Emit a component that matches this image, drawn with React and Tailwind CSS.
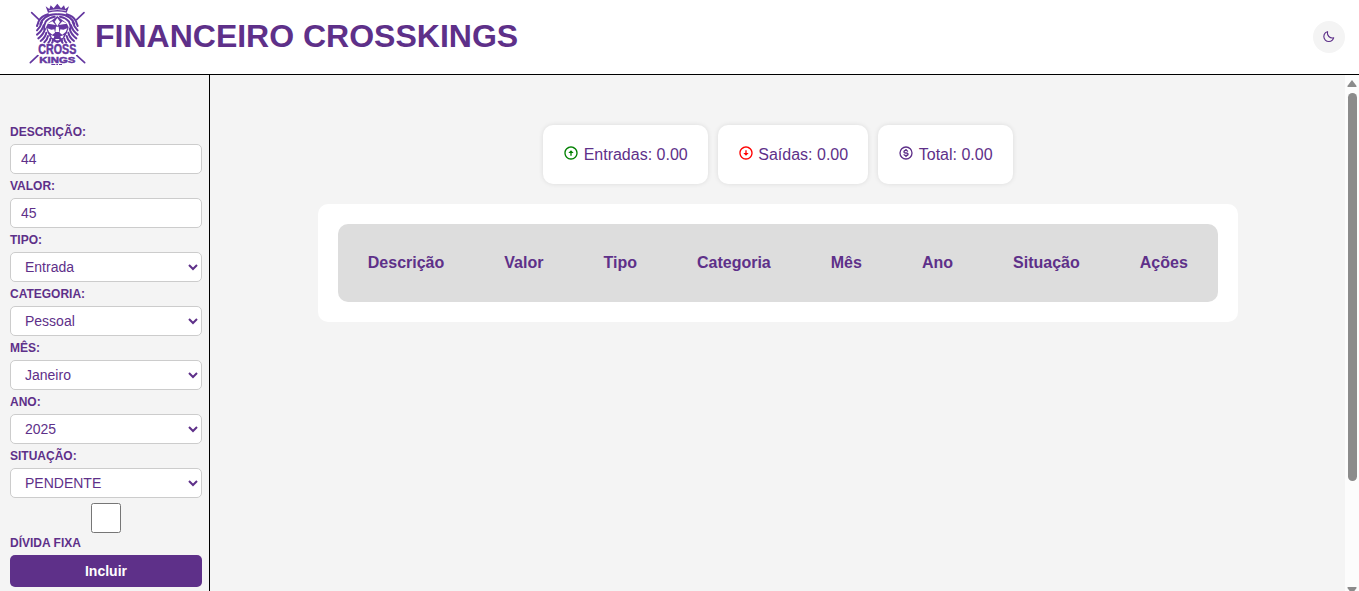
import { BiMoon, BiUpArrowCircle, BiDownArrowCircle, BiDollarCircle } from "react-icons/bi";

function ManeHalf() {
  return (
    <g fill="none" stroke="#6437a0" strokeWidth="6" strokeLinecap="round">
      <path d="M110 43Q90 42 76 52Q66 59 61 72" />
      <path d="M84 43Q64 48 56 64Q54 71 51 78" />
      <path d="M104 50Q86 53 77 65Q71 75 73 88" />
      <path d="M66 66Q62 80 51 91" />
      <path d="M71 76Q67 92 51 104" />
      <path d="M75 87Q71 103 55 115" />
      <path d="M79 98Q76 112 62 123" />
      <path d="M84 108Q82 119 73 127" />
      <path d="M91 116Q91 123 85 128" />
      <path d="M98 122Q99 126 96 129" />
    </g>
  );
}

function Logo() {
  return (
    <svg width="60" height="64" viewBox="24 9 180 192" fill="#6437a0" stroke="none" className="shrink-0">
      <path d="M35 38 56 58M192 38 170 59M31 188 54 166M194 188 170 166" fill="none" stroke="#6437a0" strokeWidth="5" strokeLinecap="round" />
      {/* crown */}
      <path d="M77 19 88 27 92 16 101 25 112 11 123 25 132 16 136 27 147 19 140 38Q112 31 84 38Z" />
      <path d="M87 32Q112 25 138 32" fill="none" stroke="#fff" strokeWidth="2" />
      {/* mane */}
      <ManeHalf />
      <g transform="translate(224 0) scale(-1 1)">
        <ManeHalf />
      </g>
      {/* face */}
      <path d="M112 48 124 58 140 70 146 82 141 98 134 112 124 124 112 130 100 124 90 112 83 98 78 82 84 70 100 58Z" />
      <path
        d="M112 54 120 65 112 78 104 65ZM82 71 97 64 107 75 94 73ZM142 71 127 64 117 75 130 73ZM82 85 94 89 103 88 105 98 97 104 87 96ZM142 85 130 89 121 88 119 98 127 104 137 96ZM108 80H116L118 96H106ZM92 105 103 109 101 115 96 114ZM132 105 121 109 123 115 128 114ZM105 117H119L116 121H108Z"
        fill="#fff"
      />
      <path d="M52 131H171V165H166V200H57V165H52Z" fill="#fff" />
      <text fontWeight="bold" fontFamily="Liberation Sans, sans-serif" stroke="#6437a0" strokeWidth="1.5">
        <tspan x="55" y="162" fontSize="42" textLength="114" lengthAdjust="spacingAndGlyphs">CROSS</tspan>
        <tspan x="58" y="188" fontSize="28" textLength="108" lengthAdjust="spacingAndGlyphs">KINGS</tspan>
      </text>
      <path d="M94 192H106V195H94ZM109 192H114V195H109ZM117 192H126V195H117Z" />
    </svg>
  );
}

function Field({ label, children }) {
  return (
    <label className="block h-[54px]">
      <span className="block h-6 pt-[3px] text-[12px] leading-[18px] font-bold">{label}</span>
      {children}
    </label>
  );
}

const box = "block h-[30px] w-full rounded-[5px] border border-[#ccc] bg-white px-[10px] text-[14px] text-[#5e3089] outline-none";

function TextField({ label, value }) {
  return (
    <Field label={label}>
      <input className={box} defaultValue={value} />
    </Field>
  );
}

function SelectField({ label, value }) {
  return (
    <Field label={label}>
      <select className={box} defaultValue={value}>
        <option>{value}</option>
      </select>
    </Field>
  );
}

function Card({ icon: Icon, color, children }) {
  return (
    <div className="flex h-[59px] items-start rounded-[10px] bg-white px-5 pt-5 shadow-[0_0_5px_rgba(0,0,0,0.1)]">
      <Icon size={16} className={"mr-[4.6px] shrink-0 " + color} />
      <span className="text-[16px] leading-5 whitespace-nowrap">{children}</span>
    </div>
  );
}

const columns = ["Descrição", "Valor", "Tipo", "Categoria", "Mês", "Ano", "Situação", "Ações"];

export default function App() {
  return (
    <div className="flex h-[591px] w-full flex-col overflow-hidden bg-[#f4f4f4] font-['Liberation_Sans',Arial,sans-serif] text-[#5e3089]">
      <header className="flex h-[75px] shrink-0 items-center border-b border-black bg-white pr-[14px] pl-7">
        <div className="-mt-1 flex items-center">
          <Logo />
          <h1 className="mt-0.5 ml-[7px] text-[32px] leading-[38px] font-bold whitespace-nowrap">FINANCEIRO CROSSKINGS</h1>
        </div>
        <button className="ml-auto flex size-8 items-center justify-center rounded-full bg-[#f4f4f4]">
          <BiMoon size={13.33} />
        </button>
      </header>

      <div className="flex min-h-0 flex-1">
        <aside className="w-[210px] shrink-0 border-r border-black pt-[45px] pr-[7px] pl-[10px]">
          <TextField label="DESCRIÇÃO:" value="44" />
          <TextField label="VALOR:" value="45" />
          <SelectField label="TIPO:" value="Entrada" />
          <SelectField label="CATEGORIA:" value="Pessoal" />
          <SelectField label="MÊS:" value="Janeiro" />
          <SelectField label="ANO:" value="2025" />
          <SelectField label="SITUAÇÃO:" value="PENDENTE" />
          <input type="checkbox" className="mx-auto mt-[5px] block size-[30px]" />
          <span className="block h-[22px] text-[12px] leading-[20px] font-bold">DÍVIDA FIXA</span>
          <button className="block h-8 w-full rounded-[5px] bg-[#5e3089] text-[14px] font-bold text-white">Incluir</button>
        </aside>

        <main className="flex min-w-0 flex-1 flex-col items-center pt-[50px] pl-[0.6px]">
          <div className="flex gap-[10px]">
            <Card icon={BiUpArrowCircle} color="text-[#008000]">Entradas: 0.00</Card>
            <Card icon={BiDownArrowCircle} color="text-[#ff0000]">Saídas: 0.00</Card>
            <Card icon={BiDollarCircle} color="text-[#5e3089]">Total: 0.00</Card>
          </div>
          <div className="mt-5 w-[920px] rounded-[10px] bg-white p-5">
            <div className="flex h-[78px] items-center justify-between rounded-[10px] bg-[#ddd] px-[30px] text-[16px] font-bold">
              {columns.map((name) => (
                <span key={name}>{name}</span>
              ))}
            </div>
          </div>
        </main>

        <div className="flex w-[14px] shrink-0 flex-col items-center bg-[#fcfcfc] pt-[5px]">
          <svg width="10" height="7" viewBox="0 0 10 7" className="shrink-0" fill="#8b8b8b">
            <path d="M5 0 9.6 6Q9.8 7 8.9 7H1.1Q0.2 7 0.4 6Z" />
          </svg>
          <div className="mt-[6px] h-[388px] w-[9px] shrink-0 rounded-full bg-[#8b8b8b]" />
          <svg width="10" height="7" viewBox="0 0 10 7" className="mt-[106px] shrink-0" fill="#8b8b8b">
            <path d="M5 7 9.6 1Q9.8 0 8.9 0H1.1Q0.2 0 0.4 1Z" />
          </svg>
        </div>
      </div>
    </div>
  );
}
